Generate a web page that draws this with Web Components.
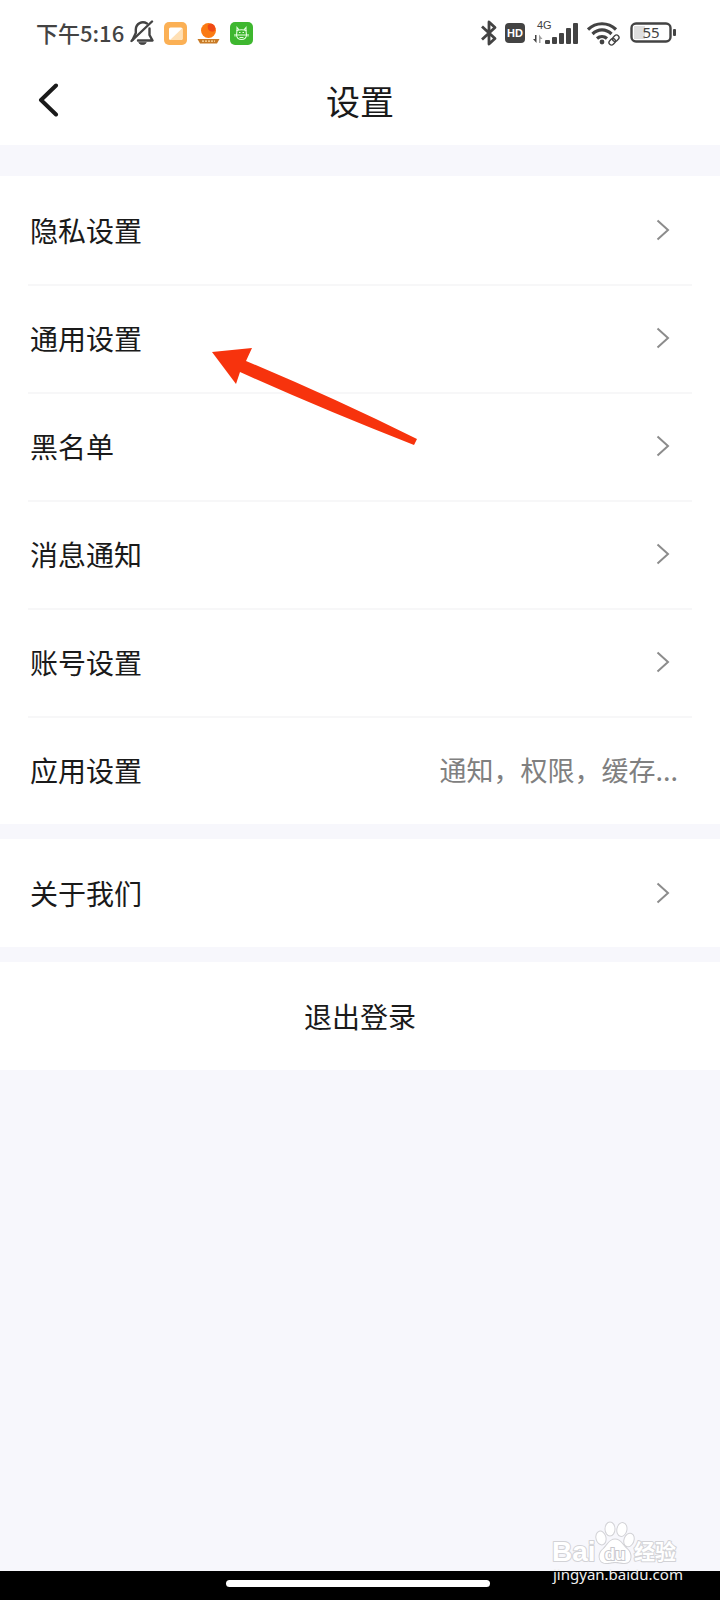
<!DOCTYPE html>
<html lang="zh-CN">
<head>
<meta charset="utf-8">
<meta name="viewport" content="width=device-width, initial-scale=1">
<title>设置</title>
<style>
html, body {
    margin: 0;
    background: #f7f7fc;
}

body {
    font-family: "Noto Sans CJK SC", sans-serif;
    color: #1a1a1a;
}
</style>
</head>
<body>
<settings-page>
    <status-bar slot="top" time="下午5:16"></status-bar>
    <page-header slot="top">设置</page-header>

    <settings-group>
        <settings-item>隐私设置</settings-item>
        <settings-item>通用设置</settings-item>
        <settings-item>黑名单</settings-item>
        <settings-item>消息通知</settings-item>
        <settings-item>账号设置</settings-item>
        <settings-item note="通知，权限，缓存...">应用设置</settings-item>
        <pointer-arrow slot="overlay"></pointer-arrow>
    </settings-group>
    <settings-group>
        <settings-item>关于我们</settings-item>
    </settings-group>
    <settings-group>
        <action-button>退出登录</action-button>
    </settings-group>

    <nav-bar slot="bottom"></nav-bar>
    <site-mark slot="bottom"></site-mark>
</settings-page>

<script>
function makeTemplate(html) {
    const template = document.createElement("template")
    template.innerHTML = html
    return template
}

class BaseElement extends HTMLElement {
    constructor() {
        super()
        this.attachShadow({mode: "open"})
        this.shadowRoot.appendChild(this.constructor.template.content.cloneNode(true))
    }
}


class SettingsPage extends BaseElement {
    static template = makeTemplate(`
<style>
:host {
    display: flex;
    flex-direction: column;
    position: relative;
    min-height: 100vh;
}

main {
    display: flex;
    flex-direction: column;
    gap: 15px;
    flex: 1;
    padding-top: 31px;
}
</style>
<slot name="top"></slot>
<main><slot></slot></main>
<slot name="bottom"></slot>
`)
}


class StatusBar extends BaseElement {
    static template = makeTemplate(`
<style>
:host {
    display: flex;
    align-items: center;
    justify-content: space-between;
    height: 66px;
    padding: 0 44px 0 36px;
    background: #fff;
    color: #434343;
}

.side {
    display: flex;
    align-items: center;
    gap: 10px;
}

.system {
    gap: 8px;
}

.clock {
    display: flex;
    align-items: center;
    gap: 6px;
}

time {
    padding-bottom: 2px;
    font-size: 22px;
    line-height: 32px;
    font-weight: 500;
}

svg {
    display: block;
}

.battery {
    margin-left: 2px;
}
</style>
<div class="side">
    <div class="clock">
        <time></time>
        <!-- muted bell -->
        <svg width="24" height="26" viewBox="0 0 24 26" fill="none" stroke="#434343" stroke-width="2.4" stroke-linecap="round" stroke-linejoin="round">
            <path d="M17 3.500C12 0.500 6 3.500 5.800 9.500V13L2.500 20"/>
            <path d="M19.500 8.500V15L22.500 20.500H8"/>
            <path d="M22 1.500L1.500 21"/>
            <path d="M9 23C10.500 25 14.500 25 16 23Z" fill="#434343" stroke-width="1"/>
        </svg>
    </div>
    <!-- orange note app -->
    <svg width="23" height="23" viewBox="0 0 23 23">
        <rect width="23" height="23" rx="5" fill="#fbb055"/>
        <rect x="5" y="5.500" width="13.500" height="12.500" rx="1.500" fill="#fff"/>
        <path d="M18.500 6V16.500Q18.500 18 17 18H6Z" fill="#ffe0b5"/>
    </svg>
    <!-- red fruit on a plate -->
    <svg width="23" height="23" viewBox="0 0 23 23">
        <circle cx="11.500" cy="8.500" r="7.500" fill="#fb7a12"/>
        <path d="M11 3C15 -0.500 20 4 17.500 9C14 11 9.500 8 11 3Z" fill="#ef4a15"/>
        <path d="M0.500 17H22.500L20 21.500H3Z" fill="#c87a26"/>
        <path d="M5 19.200H18" stroke="#ffe0a8" stroke-width="1.200" stroke-dasharray="2 1"/>
    </svg>
    <!-- green robot app -->
    <svg width="23" height="23" viewBox="0 0 23 23" fill="none" stroke="#e6ffe0" stroke-width="1.100">
        <rect width="23" height="23" rx="5" fill="#3eb72f" stroke="none"/>
        <path d="M7 8.500C9 7.500 14 7.500 16 8.500L16.500 13C16 19 7 19 6.500 13Z"/>
        <path d="M7 9V5.500L9 7.800M16 9V5.500L14 7.800M6.500 13H16.500M9 10.500H10.500M12.500 10.500H14M5 12V14.500M18 12V14.500M9.500 15.500H13.500"/>
    </svg>
</div>
<div class="side system">
    <!-- bluetooth -->
    <svg width="16" height="26" viewBox="0 0 16 26" fill="none" stroke="#434343" stroke-width="2.800" stroke-linejoin="round">
        <path d="M1 6.500L14 18.500L8 24V2L14 7.500L1 19.500"/>
    </svg>
    <svg width="20" height="20" viewBox="0 0 20 20">
        <rect width="20" height="20" rx="4" fill="#434343"/>
        <text x="10" y="14" text-anchor="middle" font-family="Liberation Sans, sans-serif" font-weight="700" font-size="11" fill="#fff">HD</text>
    </svg>
    <!-- mobile signal -->
    <svg width="46" height="26" viewBox="0 0 46 26" fill="#434343">
        <text x="4" y="9" font-family="Liberation Sans, sans-serif" font-size="11">4G</text>
        <path d="M2 15H3.500V23L0 19H2Z"/>
        <path d="M6 23V14.500L9.500 19H7.500V23Z" fill="#a0a0a0"/>
        <rect x="12" y="20" width="5" height="4" rx="1"/>
        <rect x="19" y="17" width="5" height="7" rx="1"/>
        <rect x="26" y="13" width="5" height="11" rx="1"/>
        <rect x="33" y="8" width="5" height="16" rx="1"/>
        <rect x="40" y="3" width="5" height="21" rx="1"/>
    </svg>
    <!-- wifi with link badge -->
    <svg width="33" height="26" viewBox="0 0 33 26" fill="none" stroke="#434343" stroke-width="3.200">
        <path d="M1 9.500C9 1.800 21 1.800 29 9.500"/>
        <path d="M5.500 14C11 8.500 19 8.500 24.500 14"/>
        <path d="M10 18.500C13 15.800 17 15.800 20 18.500"/>
        <circle cx="15" cy="22" r="2.400" fill="#434343" stroke="none"/>
        <g stroke-width="1.400" transform="rotate(-45 27 20)">
            <rect x="21" y="17.500" width="7" height="5" rx="2.500"/>
            <rect x="26" y="17.500" width="7" height="5" rx="2.500"/>
        </g>
    </svg>
    <!-- battery -->
    <svg class="battery" width="46" height="22" viewBox="0 0 46 22">
        <rect x="4" y="4" width="11" height="13" fill="#dedede"/>
        <rect x="1.500" y="1.500" width="39" height="18" rx="4.500" fill="none" stroke="#434343" stroke-width="2.400"/>
        <rect x="43" y="7" width="3" height="7" rx="1" fill="#434343"/>
        <text x="21" y="16" text-anchor="middle" font-family="Noto Sans, sans-serif" font-size="15" fill="#434343">55</text>
    </svg>
</div>
`)

    connectedCallback() {
        this.shadowRoot.querySelector("time").textContent = this.getAttribute("time")
    }
}


class PageHeader extends BaseElement {
    static template = makeTemplate(`
<style>
:host {
    display: grid;
    grid-template-columns: 96px 1fr 96px;
    align-items: center;
    box-sizing: border-box;
    height: 79px;
    padding-bottom: 10px;
    background: #fff;
}

button {
    height: 64px;
    padding: 0 0 2px 36px;
    border: 0;
    background: none;
    text-align: left;
}

svg {
    display: block;
}

h1 {
    margin: 0;
    font-size: 34px;
    line-height: 48px;
    font-weight: 400;
    text-align: center;
}
</style>
<button aria-label="返回">
    <svg width="24" height="34" viewBox="0 0 24 34" fill="none" stroke="#1a1a1a" stroke-width="4" stroke-linecap="round" stroke-linejoin="round">
        <path d="M20 2.500L5 17L20 31.500"/>
    </svg>
</button>
<h1><slot></slot></h1>
`)
}


class SettingsGroup extends BaseElement {
    static template = makeTemplate(`
<style>
:host {
    display: block;
    position: relative;
    background: #fff;
}

::slotted(settings-item:not(:first-child)) {
    --divider: #f7f7f8;
}
</style>
<slot></slot>
<slot name="overlay"></slot>
`)
}


class SettingsItem extends BaseElement {
    static template = makeTemplate(`
<style>
:host {
    display: block;
    padding: 0 28px;
}

a {
    display: flex;
    align-items: center;
    justify-content: space-between;
    box-sizing: border-box;
    height: 108px;
    padding: 0 14px 3px 2px;
    border-top: 2px solid var(--divider, transparent);
    color: inherit;
    text-decoration: none;
    font-size: 28px;
    line-height: 40px;
}

.note {
    font-size: 27px;
    color: #808080;
}

svg {
    display: block;
    margin-right: 8px;
}
</style>
<a href="#">
    <span><slot></slot></span>
    <svg width="14" height="22" viewBox="0 0 14 22" fill="none" stroke="#8c8c8c" stroke-width="2">
        <path d="M1.500 1.500L12 11L1.500 20.500"/>
    </svg>
</a>
`)

    // an item with a note shows it in place of the chevron
    connectedCallback() {
        if (!this.hasAttribute("note")) return;

        let note = document.createElement("span")
        note.className = "note"
        note.textContent = this.getAttribute("note")
        this.shadowRoot.querySelector("svg").replaceWith(note)
    }
}


class ActionButton extends BaseElement {
    static template = makeTemplate(`
<style>
:host {
    display: block;
}

button {
    display: block;
    width: 100%;
    height: 108px;
    border: 0;
    background: none;
    font: inherit;
    font-size: 28px;
    line-height: 40px;
    color: inherit;
}
</style>
<button><slot></slot></button>
`)
}


class PointerArrow extends BaseElement {
    static template = makeTemplate(`
<style>
:host {
    position: absolute;
    left: 212px;
    top: 171px;
    pointer-events: none;
}

svg {
    display: block;
}
</style>
<svg width="206" height="99" viewBox="0 0 206 99">
    <path d="M0 5L40 1L34 14Q120 50 205 92L202 98Q110 62 28 25L24 37Z" fill="#f7330d"/>
</svg>
`)
}


class NavBar extends BaseElement {
    static template = makeTemplate(`
<style>
:host {
    display: flex;
    align-items: center;
    justify-content: center;
    box-sizing: border-box;
    height: 29px;
    padding: 0 4px 4px 0;
    background: #000;
}

.handle {
    width: 37%;
    height: 7px;
    border-radius: 4px;
    background: #fff;
}
</style>
<div class="handle"></div>
`)
}


class SiteMark extends BaseElement {
    static template = makeTemplate(`
<style>
:host {
    position: absolute;
    right: 36px;
    bottom: 14px;
    pointer-events: none;
}

svg {
    display: block;
}
</style>
<svg width="134" height="66" viewBox="0 0 134 66">
    <g fill="#fff" stroke="#d2d2d6" stroke-width="2" stroke-linejoin="round" paint-order="stroke">
        <text x="2" y="41" font-family="Liberation Sans, sans-serif" font-size="28" font-weight="700">Bai</text>
        <ellipse cx="51" cy="18" rx="4.500" ry="6.500" transform="rotate(-15 51 18)"/>
        <ellipse cx="60" cy="9" rx="4.500" ry="6.500"/>
        <ellipse cx="72" cy="9.500" rx="4.500" ry="6.500" transform="rotate(12 72 9)"/>
        <ellipse cx="79" cy="20" rx="4.500" ry="6.500" transform="rotate(20 79 20)"/>
        <path d="M65 19.500C59 19.500 58 25 53.500 29C48 33 48 43 56 43C61 43 61 42 65 42C69 42 70 43 75 43C82 43 82 33 77 29C72 25 71 19.500 65 19.500Z"/>
        <text x="84" y="39" font-family="Noto Sans CJK SC, sans-serif" font-size="21" font-weight="700">经验</text>
    </g>
    <text x="65" y="40" text-anchor="middle" font-family="Liberation Sans, sans-serif" font-size="17" font-weight="700" fill="#fff" stroke="#c8c8cd" stroke-width="2" paint-order="stroke">du</text>
    <text x="3" y="60" font-family="Noto Sans, sans-serif" font-size="15" fill="#f0f0f0">jingyan.baidu.com</text>
</svg>
`)
}

customElements.define("settings-page", SettingsPage)
customElements.define("status-bar", StatusBar)
customElements.define("page-header", PageHeader)
customElements.define("settings-group", SettingsGroup)
customElements.define("settings-item", SettingsItem)
customElements.define("action-button", ActionButton)
customElements.define("pointer-arrow", PointerArrow)
customElements.define("nav-bar", NavBar)
customElements.define("site-mark", SiteMark)
</script>
</body>
</html>
